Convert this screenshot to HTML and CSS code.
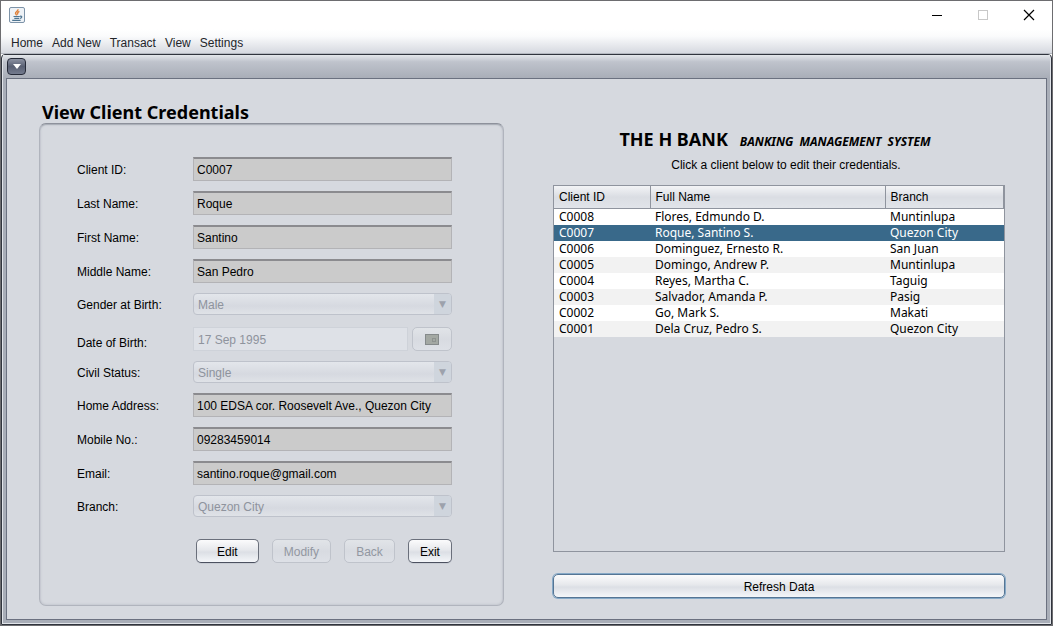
FILE: index.html
```html
<!DOCTYPE html>
<html lang="en">
<head>
<meta charset="utf-8">
<meta name="viewport" content="width=device-width, initial-scale=1">
<title>The H Bank</title>
<link rel="stylesheet" href="styles.css">
</head>
<body>
<div class="window">
  <header class="titlebar">
    <svg class="java-icon" viewBox="0 0 16 16" width="16" height="16" aria-hidden="true">
      <rect x="0.5" y="0.5" width="15" height="15" rx="1.5" fill="#eef2f6" stroke="#7d93a8"/>
      <path d="M8.9 2.200C9.600 4 6.200 4.700 6.500 6.300C6.700 7.200 7.600 7.600 7.600 8.600M10.400 4.400C8.600 5.200 8 6 8.700 7.600" fill="none" stroke="#e0813a" stroke-width="1.400"/>
      <path d="M4.500 9.500H10.800M5.300 11.300H10.300M3.200 13.300H11.600M11 9.300C13.500 8.700 13.200 11 11 11.400" fill="none" stroke="#4f7591" stroke-width="1.200"/>
    </svg>
    <div class="window-controls">
      <button class="win-btn" type="button" aria-label="Minimize"><svg width="12" height="12" viewBox="0 0 12 12"><path d="M1 6.500H11" stroke="#000"/></svg></button>
      <button class="win-btn" type="button" aria-label="Maximize" disabled><svg width="12" height="12" viewBox="0 0 12 12"><rect x="1.500" y="1.500" width="9" height="9" fill="none" stroke="#c8c8c8"/></svg></button>
      <button class="win-btn" type="button" aria-label="Close"><svg width="12" height="12" viewBox="0 0 12 12"><path d="M1 1L11 11M11 1L1 11" stroke="#000" stroke-width="1.200"/></svg></button>
    </div>
  </header>
  <nav class="menubar">
    <button type="button">Home</button>
    <button type="button">Add New</button>
    <button type="button">Transact</button>
    <button type="button">View</button>
    <button type="button">Settings</button>
  </nav>
  <div class="frame">
    <div class="frame-bar">
      <button class="frame-menu" type="button" aria-label="Frame menu"><svg width="8" height="5" viewBox="0 0 8 5"><path d="M0 0H8L4 5Z" fill="#fff"/></svg></button>
    </div>
    <main class="content">
      <section class="client">
        <h1 class="client-title">View Client Credentials</h1>
        <form class="panel">
          <div class="row"><label for="cid">Client ID:</label><input class="field" id="cid" value="C0007" readonly></div>
          <div class="row"><label for="last">Last Name:</label><input class="field" id="last" value="Roque" readonly></div>
          <div class="row"><label for="first">First Name:</label><input class="field" id="first" value="Santino" readonly></div>
          <div class="row"><label for="middle">Middle Name:</label><input class="field" id="middle" value="San Pedro" readonly></div>
          <div class="row"><label for="gender">Gender at Birth:</label><div class="combo"><select id="gender" disabled><option>Male</option></select></div></div>
          <div class="row row-date"><label for="dob">Date of Birth:</label>
            <div class="date">
              <input class="date-field" id="dob" value="17 Sep 1995" disabled>
              <button class="btn" type="button" aria-label="Choose date" disabled><svg width="14" height="11" viewBox="0 0 14 11"><rect x="0.5" y="0.5" width="13" height="10" fill="#a3a8a3" stroke="#858a8b"/><rect x="7.500" y="4.500" width="3" height="3" fill="none" stroke="#8d928f"/></svg></button>
            </div>
          </div>
          <div class="row"><label for="civil">Civil Status:</label><div class="combo"><select id="civil" disabled><option>Single</option></select></div></div>
          <div class="row"><label for="address">Home Address:</label><input class="field" id="address" value="100 EDSA cor. Roosevelt Ave., Quezon City" readonly></div>
          <div class="row"><label for="mobile">Mobile No.:</label><input class="field" id="mobile" value="09283459014" readonly></div>
          <div class="row"><label for="email">Email:</label><input class="field" id="email" value="santino.roque@gmail.com" readonly></div>
          <div class="row"><label for="branch">Branch:</label><div class="combo"><select id="branch" disabled><option>Quezon City</option></select></div></div>
          <div class="actions">
            <button class="btn" type="button">Edit</button>
            <button class="btn" type="button" disabled>Modify</button>
            <button class="btn" type="button" disabled>Back</button>
            <button class="btn" type="button">Exit</button>
          </div>
        </form>
      </section>
      <section class="bank">
        <h2 class="brand"><span class="brand-name">THE H BANK</span> <em class="brand-sub">BANKING  MANAGEMENT  SYSTEM</em></h2>
        <p class="hint">Click a client below to edit their credentials.</p>
        <div class="table-box">
          <table class="clients">
            <colgroup><col class="col-id"><col class="col-name"><col class="col-branch"></colgroup>
            <thead><tr><th>Client ID</th><th>Full Name</th><th>Branch</th></tr></thead>
            <tbody>
              <tr><td>C0008</td><td>Flores, Edmundo D.</td><td>Muntinlupa</td></tr>
              <tr class="selected"><td>C0007</td><td>Roque, Santino S.</td><td>Quezon City</td></tr>
              <tr><td>C0006</td><td>Dominguez, Ernesto R.</td><td>San Juan</td></tr>
              <tr><td>C0005</td><td>Domingo, Andrew P.</td><td>Muntinlupa</td></tr>
              <tr><td>C0004</td><td>Reyes, Martha C.</td><td>Taguig</td></tr>
              <tr><td>C0003</td><td>Salvador, Amanda P.</td><td>Pasig</td></tr>
              <tr><td>C0002</td><td>Go, Mark S.</td><td>Makati</td></tr>
              <tr><td>C0001</td><td>Dela Cruz, Pedro S.</td><td>Quezon City</td></tr>
            </tbody>
          </table>
        </div>
        <button class="btn btn-focus" type="button">Refresh Data</button>
      </section>
    </main>
  </div>
</div>
</body>
</html>
```

FILE: styles.css
```css
* { box-sizing: border-box; }

body {
  margin: 0;
  font: 12px/16px "Liberation Sans", Arial, sans-serif;
  color: #000;
  background: #d6d9df;
}

button, input, select { font: inherit; color: inherit; margin: 0; }

.window {
  display: flex;
  flex-direction: column;
  min-height: 100vh;
  border: 1px solid #6d6d70;
  background: #fff;
}

/* Title bar and menus */
.titlebar {
  display: flex;
  justify-content: space-between;
  align-items: center;
  height: 28px;
  padding-left: 8px;
}

.window-controls { display: flex; height: 100%; }

.win-btn {
  display: grid;
  place-items: center;
  width: 46px;
  padding: 0;
  border: 0;
  background: none;
}

.menubar {
  display: flex;
  gap: 9px;
  height: 25px;
  padding: 4px 10px 0;
  background: linear-gradient(#fff, #fafbfc 30%, #d6d9e0);
  border-bottom: 1px solid #b4b8c0;
}

.menubar button {
  padding: 0;
  border: 0;
  background: none;
  color: #232529;
}

/* Internal frame */
.frame {
  flex: 1;
  display: flex;
  flex-direction: column;
  padding: 0 4px 4px;
  border: 1px solid #30343d;
  border-radius: 4px 4px 0 0;
  background: #a9aeb8;
  box-shadow: inset 0 0 0 1px #e1e4e9;
}

.frame-bar {
  display: flex;
  align-items: center;
  height: 23px;
  margin: 0 -3px;
  padding-left: 4px;
  background: linear-gradient(#e4e7eb, #bfc3cc 30%, #a9aeb8);
}

.frame-menu {
  display: grid;
  place-items: center;
  width: 19px;
  height: 17px;
  padding: 0;
  border: 1px solid #252a38;
  border-radius: 4px;
  background: linear-gradient(#8c92a2, #596073 50%, #747b8e);
}

.content {
  flex: 1;
  display: grid;
  grid-template-columns: 465fr 452fr;
  gap: 49px;
  padding: 22px 41px 13px 32px;
  border: 1px solid #6b7180;
  background: #d6d9df;
}

/* Client form */
.client { display: flex; flex-direction: column; }

.client-title {
  margin: 0;
  padding-left: 3px;
  font: bold 18px/22px "Noto Sans", "Open Sans", sans-serif;
}

.panel {
  flex: 1;
  display: flex;
  flex-direction: column;
  gap: 10px;
  padding: 33px 51px 32px 37px;
  border: 1px solid #b0b4bd;
  border-top-color: #8d919b;
  border-radius: 7px;
  box-shadow: inset 0 1px 1px #a9adb6, inset 0 0 2px 1px #c6c9d1;
}

.row {
  display: grid;
  grid-template-columns: 116px 1fr;
  align-items: center;
}

.row label { padding-top: 2px; }

.row-date {
  align-items: end;
  padding-top: 2px;
}

.field {
  width: 100%;
  height: 24px;
  padding: 0 3px;
  border: 1px solid #b3b3b6;
  border-top: 2px solid #8b8b8f;
  border-radius: 0;
  background: #cbcbcb;
  outline: 0;
}

.combo {
  display: grid;
  grid-template-columns: 1fr 17px;
  height: 22px;
  border: 1px solid #bec2cb;
  border-radius: 4px;
  background: linear-gradient(#e3e6eb, #d6d9e0 60%, #dfe2e7);
  color: #8e939d;
}

.combo select {
  grid-area: 1 / 1 / 2 / 3;
  appearance: none;
  padding: 2px 20px 0 4px;
  border: 0;
  background: none;
  opacity: 1;
}

.combo::after {
  content: "\25BC";
  grid-area: 1 / 2;
  font: 9px/20px "DejaVu Sans", sans-serif;
  text-align: center;
  color: #9da2ac;
  background: #cfd5dd;
  border-radius: 0 3px 3px 0;
}

.date {
  display: grid;
  grid-template-columns: 1fr 40px;
  gap: 4px;
}

.date-field {
  min-width: 0;
  height: 24px;
  padding: 2px 4px 0;
  border: 1px solid #ced2d9;
  background: #dee1e7;
  color: #8e939d;
}

.btn {
  height: 24px;
  padding: 1px 19px 0;
  border: 1px solid #6a6f7b;
  border-bottom-color: #4c5160;
  border-radius: 5px;
  background: linear-gradient(#fbfbfc, #e6e8ec 45%, #dcdfe5 55%, #f4f6f9);
  box-shadow: 0 1px 0 #c8ccd3;
}

.btn:disabled {
  border-color: #bfc3cb;
  background: linear-gradient(#e1e4e8, #d8dbe1 50%, #dde0e6);
  color: #9297a1;
  box-shadow: none;
}

.date .btn {
  display: grid;
  place-items: center;
  padding: 0;
}

.actions {
  display: flex;
  justify-content: space-between;
  margin-left: 116px;
  padding: 12px 0 0 3px;
}

.actions .btn { padding: 1px 11px 0; }
.actions .btn:first-child { padding: 1px 20px 0; }

/* Client list */
.bank {
  display: flex;
  flex-direction: column;
  padding: 26px 0 8px;
}

.brand {
  display: flex;
  justify-content: center;
  align-items: baseline;
  gap: 12px;
  margin: 0;
  padding-right: 8px;
  line-height: 24px;
  font-family: "Noto Sans", "Open Sans", sans-serif;
}

.brand-name { font-size: 18px; }
.brand-sub { font-size: 12px; white-space: pre; }

.hint {
  margin: 3px 0 12px;
  padding-left: 14px;
  text-align: center;
}

.table-box {
  flex: 1;
  border: 1px solid #8f949e;
}

.clients {
  width: 100%;
  table-layout: fixed;
  border-collapse: collapse;
  font: 12px/16px "Noto Sans", "Open Sans", sans-serif;
}

.col-id { width: 96px; }
.col-name { width: 235px; }

.clients th {
  height: 22px;
  padding: 0 5px;
  font: 12px/20px "Liberation Sans", Arial, sans-serif;
  text-align: left;
  background: linear-gradient(#f3f4f6, #dadde3 50%, #e1e4e9);
  border-right: 1px solid #8f949e;
  border-bottom: 1px solid #8f949e;
}

.clients td { height: 16px; padding: 0 5px; }
.clients tbody tr { background: #fff; }
.clients tbody tr:nth-child(even) { background: #f2f2f2; }
.clients tbody tr.selected { background: #39698a; color: #fff; }

.btn-focus {
  margin-top: 22px;
  border-color: #557594;
  box-shadow: 0 0 0 1px #86a9c7;
}
```
